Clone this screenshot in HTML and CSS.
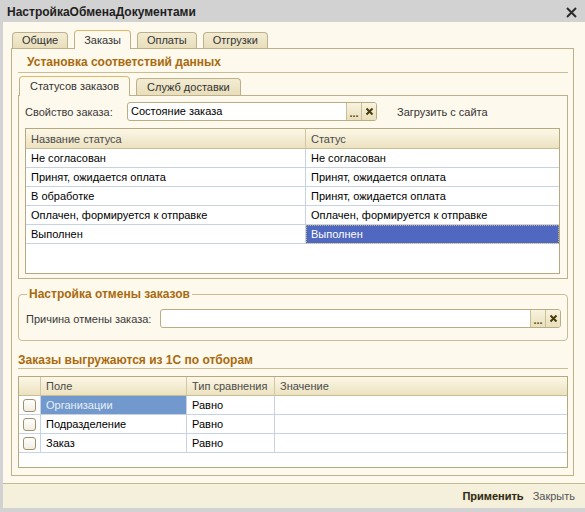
FILE: index.html
```html
<!DOCTYPE html>
<html lang="ru">
<head>
  <meta charset="UTF-8">
  <title>НастройкаОбменаДокументами</title>
  <link rel="stylesheet" href="styles.css">
</head>
<body>
  <div class="window">
    <!-- Заголовок окна -->
    <div class="titlebar">
      <span class="title">НастройкаОбменаДокументами</span>
      <svg class="close" width="11" height="11" viewBox="0 0 11 11">
        <path d="M1 1L10 10M10 1L1 10" stroke="#2b2b2b" stroke-width="2"/>
      </svg>
    </div>

    <div class="frame">
      <div class="content">
        <div class="tabs">
          <div class="tab">Общие</div>
          <div class="tab active">Заказы</div>
          <div class="tab">Оплаты</div>
          <div class="tab">Отгрузки</div>
        </div>

        <div class="tab-panel">
          <div class="section-title">Установка соответствий данных</div>

          <div class="tabs tabs-inner">
            <div class="tab active">Статусов заказов</div>
            <div class="tab">Служб доставки</div>
          </div>

          <div class="inner-panel">
            <div class="field-row">
              <span class="label label-prop">Свойство заказа:</span>
              <div class="input input-prop">
                <span class="input-text">Состояние заказа</span>
                <span class="input-btn dots">...</span>
                <span class="input-btn">
                  <svg width="9" height="9" viewBox="0 0 9 9"><path d="M1.5 1.5L7.5 7.5M7.5 1.5L1.5 7.5" stroke="#4a3c0c" stroke-width="2"/></svg>
                </span>
              </div>
              <span class="link">Загрузить с сайта</span>
            </div>

            <div class="grid grid-status">
              <table>
                <tr>
                  <th class="col-name">Название статуса</th>
                  <th>Статус</th>
                </tr>
                <tr><td>Не согласован</td><td>Не согласован</td></tr>
                <tr><td>Принят, ожидается оплата</td><td>Принят, ожидается оплата</td></tr>
                <tr><td>В обработке</td><td>Принят, ожидается оплата</td></tr>
                <tr><td>Оплачен, формируется к отправке</td><td>Оплачен, формируется к отправке</td></tr>
                <tr><td>Выполнен</td><td class="selected">Выполнен</td></tr>
              </table>
            </div>
          </div>

          <fieldset class="group">
            <legend>Настройка отмены заказов</legend>
            <div class="field-row">
              <span class="label label-cancel">Причина отмены заказа:</span>
              <div class="input input-wide">
                <span class="input-text"></span>
                <span class="input-btn dots">...</span>
                <span class="input-btn">
                  <svg width="9" height="9" viewBox="0 0 9 9"><path d="M1.5 1.5L7.5 7.5M7.5 1.5L1.5 7.5" stroke="#4a3c0c" stroke-width="2"/></svg>
                </span>
              </div>
            </div>
          </fieldset>

          <div class="section-title plain">Заказы выгружаются из 1С по отборам</div>

          <div class="grid grid-filter">
            <table>
              <tr>
                <th class="col-check"></th>
                <th class="col-field">Поле</th>
                <th class="col-type">Тип сравнения</th>
                <th>Значение</th>
              </tr>
              <tr>
                <td class="col-check"><span class="checkbox"></span></td>
                <td class="selected-light">Организации</td>
                <td>Равно</td>
                <td></td>
              </tr>
              <tr>
                <td class="col-check"><span class="checkbox"></span></td>
                <td>Подразделение</td>
                <td>Равно</td>
                <td></td>
              </tr>
              <tr>
                <td class="col-check"><span class="checkbox"></span></td>
                <td>Заказ</td>
                <td>Равно</td>
                <td></td>
              </tr>
            </table>
          </div>
        </div>
      </div>

      <!-- Кнопки -->
      <div class="footer">
        <span class="btn-apply">Применить</span>
        <span class="btn-close">Закрыть</span>
      </div>
    </div>
  </div>
</body>
</html>
```

FILE: styles.css
```css
* {
  margin: 0;
  padding: 0;
  box-sizing: border-box;
}

body {
  background: #d2d2d2;
  font-family: "Liberation Sans", Arial, sans-serif;
  font-size: 11px;
  color: #333;
}

.window {
  width: 585px;
  height: 512px;
  display: flex;
  flex-direction: column;
  background: #d2d2d2;
}

/* Заголовок */
.titlebar {
  height: 22px;
  display: flex;
  align-items: center;
  justify-content: space-between;
  padding: 2px 8px 0 7px;
}

.title {
  font-size: 12px;
  font-weight: bold;
  color: #1e1e1e;
}

.frame {
  flex: 1;
  margin: 0 0 4px 3px;
  background: #fef9ed;
  display: flex;
  flex-direction: column;
}

.content {
  padding: 8px 11px 0 8px;
}

/* Закладки */
.tabs {
  display: flex;
  align-items: flex-end;
  gap: 6px;
  height: 19px;
  padding-left: 1px;
  margin-bottom: -1px;
  position: relative;
  z-index: 1;
}

.tab {
  height: 16px;
  margin-bottom: 1px;
  padding: 0 9px;
  line-height: 15px;
  border: 1px solid #bdb18b;
  border-bottom: none;
  border-radius: 4px 4px 0 0;
  background: linear-gradient(#f3ecd3, #e8debb);
  color: #333;
}

.tab.active {
  height: 19px;
  margin-bottom: 0;
  line-height: 18px;
  background: #fef9ed;
  border-top-color: #e2b868;
}

.tabs-inner {
  height: 20px;
  margin-top: 3px;
}

.tabs-inner .tab {
  height: 17px;
  line-height: 16px;
  padding: 0 10px;
}

.tabs-inner .tab.active {
  height: 20px;
  line-height: 19px;
}

.tab-panel {
  height: 428px;
  border: 1px solid #bdb18b;
  padding: 0 5px 0 6px;
  display: flex;
  flex-direction: column;
}

.section-title {
  height: 24px;
  padding: 6px 0 0 9px;
  border-bottom: 1px solid #c9bd95;
  font-size: 12px;
  font-weight: bold;
  color: #a96a0e;
}

.section-title.plain {
  height: 28px;
  padding: 12px 0 0 0;
}

.inner-panel {
  height: 184px;
  border: 1px solid #bdb18b;
  padding: 0 6px;
}

/* Поля ввода */
.field-row {
  display: flex;
  align-items: center;
  height: 19px;
  margin-top: 6px;
}

.label {
  color: #3a3a3a;
}

.label-prop {
  width: 102px;
}

.label-cancel {
  width: 134px;
}

.input {
  height: 19px;
  display: flex;
  background: #fff;
  border: 1px solid #b9ad84;
  border-radius: 3px;
  overflow: hidden;
}

.input-prop {
  width: 250px;
}

.input-wide {
  width: 401px;
}

.input-text {
  flex: 1;
  padding-left: 3px;
  line-height: 17px;
  color: #000;
}

.input-btn {
  width: 15px;
  display: flex;
  align-items: center;
  justify-content: center;
  border-left: 1px solid #cbbf98;
  background: linear-gradient(#f8f3e0, #e9dfbb);
}

.input-btn.dots {
  align-items: flex-end;
  padding-bottom: 3px;
  font-weight: bold;
  color: #5a4a14;
  line-height: 8px;
}

.link {
  margin-left: 20px;
  color: #333;
}

/* Таблицы */
.grid {
  background: #fff;
  border: 1px solid #b5a97f;
}

.grid-status {
  height: 146px;
  margin-top: 7px;
  width: 535px;
}

.grid-filter {
  height: 92px;
  margin-top: 7px;
}

table {
  width: 100%;
  border-spacing: 0;
  table-layout: fixed;
}

th {
  height: 20px;
  padding: 0 5px;
  text-align: left;
  font-weight: normal;
  color: #4a4a4a;
  background: linear-gradient(#fcf7e7, #ece2c0);
  border-bottom: 1px solid #c9bd95;
  border-right: 1px solid #d3c8a3;
}

td {
  height: 19px;
  padding: 0 5px;
  color: #000;
  border-bottom: 1px solid #c7d3e3;
  border-right: 1px solid #c7d3e3;
  white-space: nowrap;
}

th:last-child,
td:last-child {
  border-right: none;
}

.col-name {
  width: 280px;
}

.grid-filter th {
  height: 19px;
}

.col-check {
  width: 22px;
  padding: 0 0 0 4px;
}

.col-field {
  width: 146px;
}

.col-type {
  width: 88px;
}

td.selected {
  background: #5068c0;
  color: #fff;
  outline: 1px dotted #c9b77a;
  outline-offset: -1px;
}

td.selected-light {
  background: #7199cd;
  color: #e9eff7;
}

.checkbox {
  display: block;
  width: 13px;
  height: 13px;
  border: 1px solid #9e916a;
  border-radius: 3px;
  background: linear-gradient(#fff, #f1ede2);
}

/* Группа */
.group {
  margin-top: 8px;
  height: 54px;
  border: 1px solid #c9bd95;
  border-radius: 4px;
  padding: 0 6px 0 7px;
}

.group legend {
  margin-left: 1px;
  padding: 0 2px;
  font-size: 12px;
  font-weight: bold;
  color: #a96a0e;
}

.group .field-row {
  margin-top: 8px;
}

/* Нижняя панель */
.footer {
  margin-top: auto;
  height: 25px;
  display: flex;
  align-items: center;
  justify-content: flex-end;
  gap: 9px;
  padding-right: 10px;
  background: #f4f0dc;
  border-top: 1px solid #c6b98f;
}

.btn-apply {
  font-weight: bold;
  color: #2a2a2a;
  text-shadow: 0 0 2px #f0d68a;
}

.btn-close {
  color: #555;
}
```
